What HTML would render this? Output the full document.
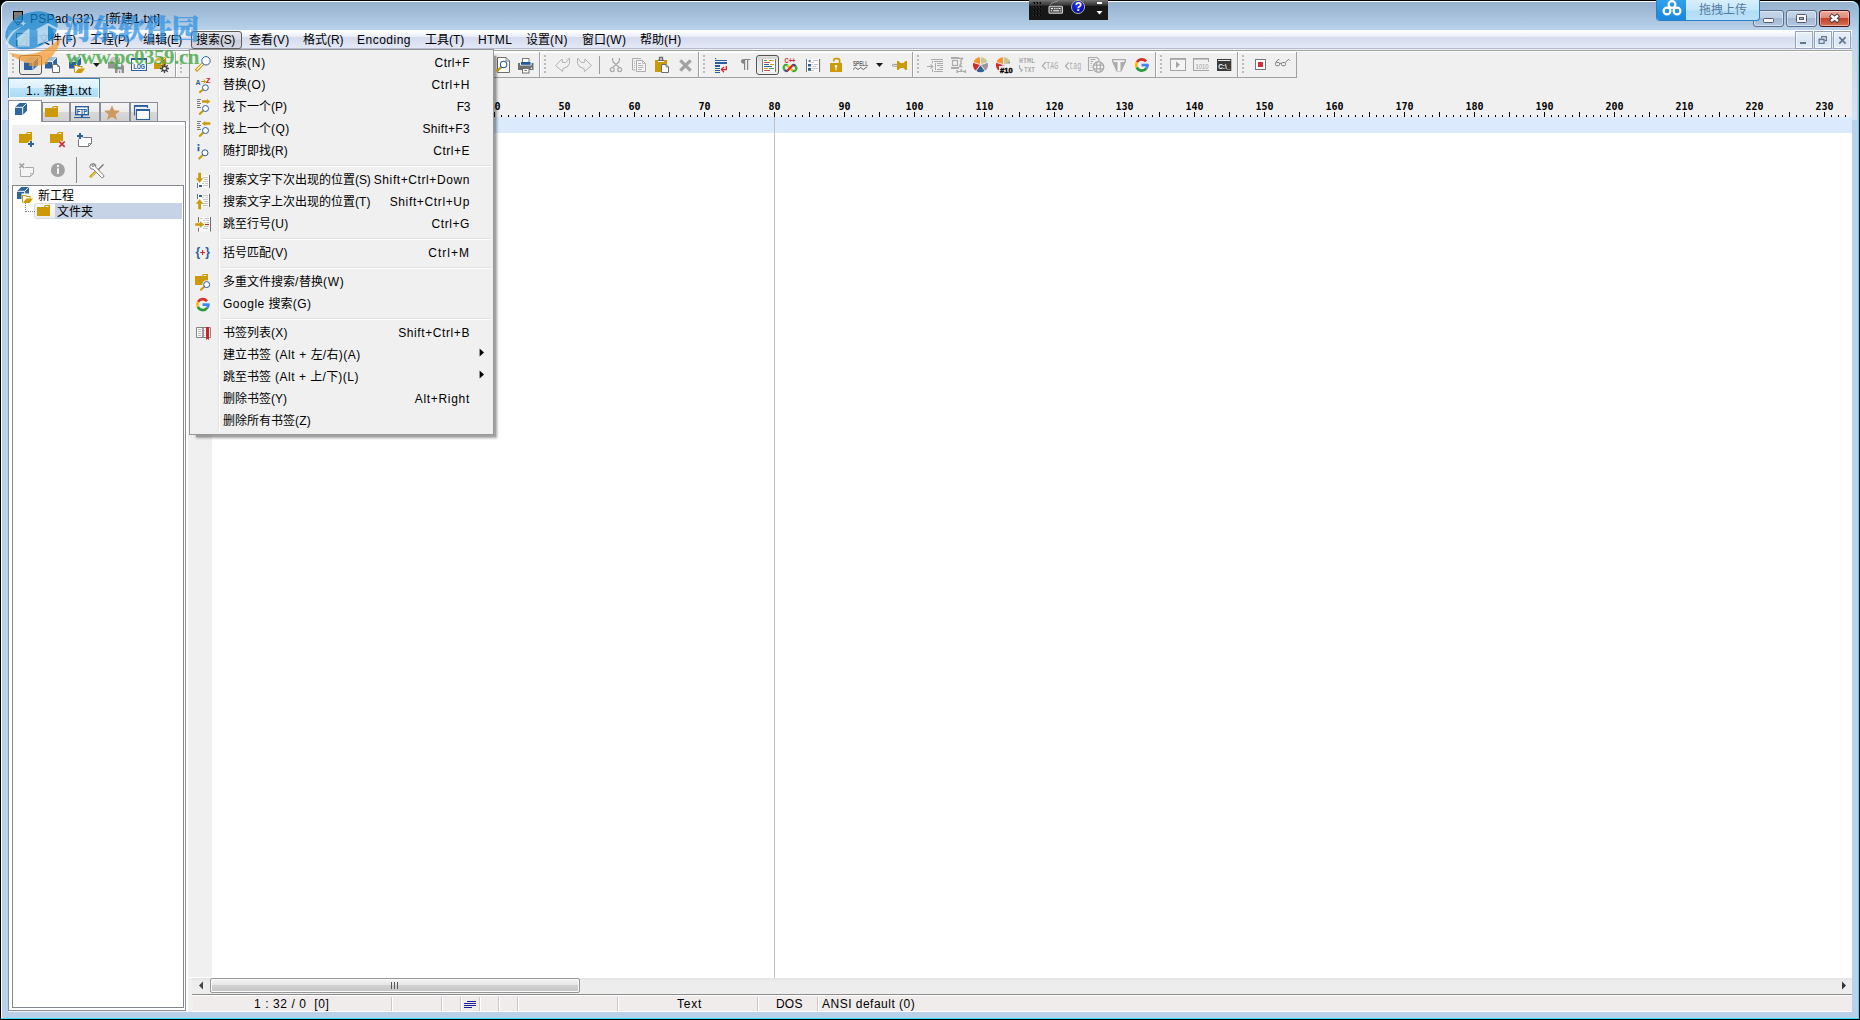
<!DOCTYPE html><html><head><meta charset="utf-8"><title>PSPad</title><style>
*{box-sizing:border-box;margin:0;padding:0}
html,body{width:1860px;height:1020px;overflow:hidden;background:#b9d1ea}
body{position:relative;font-family:"Liberation Sans","Noto Sans CJK SC",sans-serif;font-size:12px;color:#000;line-height:1}
.a{position:absolute}
.t{position:absolute;white-space:nowrap;line-height:16px;height:16px}
.mb{position:absolute;top:32px;white-space:nowrap;line-height:16px;height:16px}
.mi{position:absolute;left:33px;white-space:nowrap;line-height:16px;height:16px}
.sc{position:absolute;right:23px;white-space:nowrap;line-height:16px;height:16px;text-align:right}
.sep{position:absolute;left:31px;right:2px;height:2px;border-top:1px solid #e0e0e0;border-bottom:1px solid #fff}
.grip{position:absolute;top:55px;width:2px;height:18px;background:repeating-linear-gradient(#bcbcbc 0,#bcbcbc 2px,transparent 2px,transparent 4px)}
.tbv{position:absolute;top:52px;width:1px;height:25px;background:#a0a0a0}.tbw{position:absolute;top:51px;width:1px;height:26px;background:#fff}
svg{position:absolute;overflow:visible}
.rn{position:absolute;top:101.4px;width:40px;text-align:center;font-family:"DejaVu Sans Mono","Liberation Mono",monospace;font-weight:bold;font-size:10px;line-height:12px}
.stv{position:absolute;top:997px;width:2px;height:14px;border-left:1px solid #d0c8c8;border-right:1px solid #fff}
.pb{position:absolute;top:55px;width:23px;height:20px;border:1px solid #545454;border-radius:3px;background:linear-gradient(#cfcfcf 0,#e6e6e6 35%,#ececec 100%);box-shadow:inset 0 0 0 1px rgba(255,255,255,0.35)}
.stab{position:absolute;top:102px;height:19px;border:1px solid #8a8e99;border-bottom:none;background:linear-gradient(#f4f4f4 0,#ececec 50%,#d9d9d9 50%,#d0d0d0 100%)}
</style></head><body>
<div class="a" style="left:0;top:0;width:1860px;height:1020px;background:#000"></div>
<div class="a" style="left:1px;top:1px;width:1858px;height:1018px;background:#35dff5;border-radius:7px 7px 0 0"></div>
<div class="a" style="left:1px;top:1px;width:1857px;height:1017px;background:#fff;border-radius:7px 7px 0 0"></div>
<div class="a" style="left:2px;top:2px;width:1856px;height:1016px;background:linear-gradient(#99b4d1 0px,#9ab5d2 4px,#b9d1ea 28px,#b9d1ea 100%);border-radius:6px 6px 0 0"></div>
<div class="a" style="left:2px;top:28px;width:6px;height:92px;background:linear-gradient(rgba(255,255,255,0.05),rgba(255,255,255,0.38))"></div>
<div class="a" style="left:1852px;top:28px;width:5px;height:92px;background:linear-gradient(rgba(255,255,255,0.05),rgba(255,255,255,0.42))"></div>
<div class="a" style="left:8px;top:30px;width:1844px;height:982px;background:#f0f0f0"></div>
<div class="a" style="left:8px;top:30px;width:1844px;height:19px;background:linear-gradient(#ffffff 0,#ffffff 1px,#e8ecf7 7px,#d5daec 7px,#e4e9f8 18px,#b6bbd0 18px,#b6bbd0 19px)"></div>
<div class="a" style="left:8px;top:50px;width:1844px;height:1px;background:#a0a0a0"></div>
<div class="a" style="left:8px;top:51px;width:1844px;height:1px;background:#fff"></div>
<svg style="left:13px;top:11px" width="11" height="16" viewBox="0 0 11 16"><rect x="0.5" y="0.5" width="9" height="8" fill="#7a7a7a" stroke="#000"/><path d="M0.5 8.5 L5 14.3 L9.5 8.5" fill="#e8f0f8" stroke="#0a0a0a"/><path d="M3 10.3 L7 10.3 L5 12.6 Z" fill="#333"/></svg>
<div class="t" style="left:30px;top:11px;font-size:12px"><span id="f0"><span style="letter-spacing:0.21px">PSPad (32) - [</span>新建<span style="letter-spacing:0.21px">1.txt]</span></span></div>
<div class="a" style="left:191px;top:31px;width:51px;height:18px;border:1px solid #5d5d5d;border-radius:3px;background:linear-gradient(#e8e8ee,#d4d6e0 50%,#c9ccd8 50%,#d5d8e4)"></div>
<svg style="left:15px;top:32px" width="16" height="16" viewBox="0 0 16 16"><rect x="1.5" y="1.5" width="10" height="12" fill="#fff" stroke="#555"/><path d="M4 11 L11 3 L13 5 L6 12 L3.5 12.5 Z" fill="#f0c060" stroke="#a07020" stroke-width="0.6"/><path d="M11 3 L12 2 L14 4 L13 5 Z" fill="#e89aa8"/></svg>
<div class="mb" style="left:38px"><span id="f1">文件<span style="letter-spacing:-0.51px">(F)</span></span></div>
<div class="mb" style="left:90px"><span id="f2">工程<span style="letter-spacing:-0.23px">(P)</span></span></div>
<div class="mb" style="left:143px"><span id="f3">编辑<span style="letter-spacing:-0.33px">(E)</span></span></div>
<div class="mb" style="left:196px"><span id="f4">搜索<span style="letter-spacing:-0.33px">(S)</span></span></div>
<div class="mb" style="left:249px"><span id="f5">查看<span style="letter-spacing:0.10px">(V)</span></span></div>
<div class="mb" style="left:303px"><span id="f6">格式<span style="letter-spacing:-0.12px">(R)</span></span></div>
<div class="mb" style="left:357px"><span id="f7"><span style="letter-spacing:0.49px">Encoding</span></span></div>
<div class="mb" style="left:425px"><span id="f8">工具<span style="letter-spacing:-0.08px">(T)</span></span></div>
<div class="mb" style="left:478px"><span id="f9"><span style="letter-spacing:0.41px">HTML</span></span></div>
<div class="mb" style="left:526px"><span id="f10">设置<span style="letter-spacing:0.38px">(N)</span></span></div>
<div class="mb" style="left:582px"><span id="f11">窗口<span style="letter-spacing:0.36px">(W)</span></span></div>
<div class="mb" style="left:640px"><span id="f12">帮助<span style="letter-spacing:0.24px">(H)</span></span></div>
<div class="a" style="left:8px;top:77px;width:1289px;height:1px;background:#a0a0a0"></div>
<div class="a" style="left:8px;top:52px;width:1288px;height:1px;background:#fff"></div>
<div class="tbv" style="left:175px"></div>
<div class="tbv" style="left:539px"></div>
<div class="tbv" style="left:698px"></div>
<div class="tbv" style="left:912px"></div>
<div class="tbv" style="left:1155px"></div>
<div class="tbv" style="left:1237px"></div>
<div class="tbv" style="left:1296px"></div>
<div class="tbw" style="left:8px"></div>
<div class="tbw" style="left:176px"></div>
<div class="tbw" style="left:540px"></div>
<div class="tbw" style="left:699px"></div>
<div class="tbw" style="left:913px"></div>
<div class="tbw" style="left:1156px"></div>
<div class="tbw" style="left:1238px"></div>
<div class="grip" style="left:12px"></div>
<div class="grip" style="left:180px"></div>
<div class="grip" style="left:544px"></div>
<div class="grip" style="left:703px"></div>
<div class="grip" style="left:917px"></div>
<div class="grip" style="left:1160px"></div>
<div class="grip" style="left:1242px"></div>
<div class="pb" style="left:19px"></div>
<div class="pb" style="left:756px"></div>
<svg style="left:8px;top:52px" width="1292" height="26" viewBox="8 52 1292 26"><path d="M24 62.04 h8.96 v7.96 h-8.96 Z" fill="#2c5f9e"/><path d="M24 62.04 l5.04 -5.04 h8.96 l-5.04 5.04 Z" fill="#9fbfe0"/><path d="M32.96 62.04 l5.04 -5.04 v7.96 l-5.04 5.04 Z" fill="#2f64a4"/><path d="M24.3 62.04 h8.66 v7.66 M32.96 62.04 l4.64 -4.64" stroke="#fff" stroke-width="0.9" fill="none"/><path d="M45 61.32 h7.68 v7.18 h-7.68 Z" fill="#2c5f9e"/><path d="M45 61.32 l4.32 -4.32 h7.68 l-4.32 4.32 Z" fill="#9fbfe0"/><path d="M52.68 61.32 l4.32 -4.32 v7.18 l-4.32 4.32 Z" fill="#2f64a4"/><path d="M45.3 61.32 h7.38 v6.88 M52.68 61.32 l3.9200000000000004 -3.9200000000000004" stroke="#fff" stroke-width="0.9" fill="none"/><path d="M52.5 64.5 h5 l2 2 v6 h-7 Z" fill="#fff" stroke="#6a6a6a"/><path d="M57.5 64.5 v2 h2" fill="none" stroke="#6a6a6a" stroke-width="0.8"/><path d="M69 61.32 h7.68 v7.18 h-7.68 Z" fill="#2c5f9e"/><path d="M69 61.32 l4.32 -4.32 h7.68 l-4.32 4.32 Z" fill="#9fbfe0"/><path d="M76.68 61.32 l4.32 -4.32 v7.18 l-4.32 4.32 Z" fill="#2f64a4"/><path d="M69.3 61.32 h7.38 v6.88 M76.68 61.32 l3.9200000000000004 -3.9200000000000004" stroke="#fff" stroke-width="0.9" fill="none"/><path d="M74.5 72.5 v-7 h3 l1 1 h3.5 v2" fill="#fff" stroke="#cc9a06" stroke-width="1.1"/><path d="M75 73 l3.5 -4.5 h6.5 l-3.5 4.5 Z" fill="#cc9a06"/><path d="M93 63 h7 l-3.5 4 Z" fill="#1a1a1a"/><path d="M108 61.32 h7.68 v7.18 h-7.68 Z" fill="#959595"/><path d="M108 61.32 l4.32 -4.32 h7.68 l-4.32 4.32 Z" fill="#c4c4c4"/><path d="M115.68 61.32 l4.32 -4.32 v7.18 l-4.32 4.32 Z" fill="#a8a8a8"/><path d="M108.3 61.32 h7.38 v6.88 M115.68 61.32 l3.9200000000000004 -3.9200000000000004" stroke="#fff" stroke-width="0.9" fill="none"/><path d="M115 64 h7 l2 2 v7 h-9 Z" fill="#909090"/><rect x="117" y="64" width="4" height="2.6" fill="#f0f0f0"/><rect x="117.5" y="69.5" width="4" height="3.5" fill="#f0f0f0"/><rect x="119" y="70.5" width="1.2" height="2.5" fill="#909090"/><rect x="131.5" y="59" width="15" height="11.5" fill="#fff" stroke="#2c5f9e" stroke-width="1"/><rect x="131" y="58" width="16" height="2" fill="#2c5f9e"/><text x="139.2" y="68.6" text-anchor="middle" font-family="Liberation Sans,sans-serif" font-weight="bold" font-size="7.4" fill="#2c5f9e" stroke="#2c5f9e" stroke-width="0.2" textLength="11.4" lengthAdjust="spacingAndGlyphs">LOG</text><path d="M154 61.32 h7.68 v7.68 h-7.68 Z" fill="#cc9a06"/><path d="M154 61.32 l4.32 -4.32 h7.68 l-4.32 4.32 Z" fill="#dcb034"/><path d="M161.68 61.32 l4.32 -4.32 v7.68 l-4.32 4.32 Z" fill="#c08c04"/><path d="M154.3 61.32 h7.38 v7.38 M161.68 61.32 l3.9200000000000004 -3.9200000000000004" stroke="#fff" stroke-width="0.9" fill="none"/><path d="M155 62.4 h5" stroke="#fff" stroke-width="1"/><g stroke="#444" stroke-width="1.3"><path d="M164.5 64 v9 M160 68.5 h9 M161.3 65.3 l6.4 6.4 M167.7 65.3 l-6.4 6.4"/></g><circle cx="164.5" cy="68.5" r="1.5" fill="#f0f0f0"/><circle cx="164.5" cy="68.5" r="2.6" fill="none" stroke="#444" stroke-width="1"/><path d="M497.5 57.5 h8.5 l3.5 3.5 v11.5 h-12 Z" fill="#fff" stroke="#6e6e6e"/><path d="M506 57.5 v3.5 h3.5" fill="none" stroke="#6e6e6e" stroke-width="0.8"/><path d="M496.7 71.5 L501.5 66.7" stroke="#cc9a06" stroke-width="2.3"/><circle cx="503.6" cy="64.4" r="3.2" fill="#fff" stroke="#2c5f9e" stroke-width="1.1"/><rect x="522.5" y="58.5" width="6.5" height="5" fill="#fff" stroke="#7a7a7a"/><rect x="521" y="62" width="9.5" height="2.8" fill="#1f5c99"/><path d="M518 63 h2 v2.5 h11.5 v-2.5 h2 v7 h-15.5 Z" fill="#707070"/><circle cx="531.5" cy="68.3" r="0.8" fill="#fff"/><rect x="522.5" y="68.5" width="6.5" height="4.5" fill="#fff" stroke="#707070"/><path d="M524.5 70.5 h2.5" stroke="#707070"/><path transform="translate(554,57)" d="M1.5 8.5 L8 2 L8.5 5.5 L11.5 5.5 Q14 4 14.5 1.5 L15.5 1.5 L15.5 6.5 Q14 11 9 11.5 L8.5 14.5 Z" fill="none" stroke="#b2b2b2" stroke-width="1"/><path transform="translate(593,57) scale(-1,1)" d="M1.5 8.5 L8 2 L8.5 5.5 L11.5 5.5 Q14 4 14.5 1.5 L15.5 1.5 L15.5 6.5 Q14 11 9 11.5 L8.5 14.5 Z" fill="none" stroke="#b2b2b2" stroke-width="1"/><rect x="599" y="56" width="1" height="18" fill="#9a9a9a"/><g fill="none" stroke="#a9a9a9" stroke-width="1.2"><path d="M612.6 58 v2 Q612.6 62 616 64.5 L619.3 67.5 M619.4 58 v2 Q619.4 62 616 64.5 L612.7 67.5"/><circle cx="612.3" cy="69.6" r="2"/><circle cx="619.7" cy="69.6" r="2"/></g><g fill="none" stroke="#adadad" stroke-width="1"><path d="M641 58.5 h-8.5 v11.5 h3"/><path d="M636.5 60.5 h6 l3 3 v8 h-9 Z" fill="#f6f6f6"/><path d="M642.5 60.5 v3 h3" stroke-width="0.8"/></g><path d="M634 61.5 h1 M634 63.5 h1 M634 65.5 h1 M634 67.5 h1 M638 63.5 h3 M638 65.5 h5.5 M638 67.5 h5.5 M638 69.5 h4" stroke="#b4b4b4"/><path d="M655 60 h3 v2 h6 v-2 h3 v12 h-12 Z" fill="#cc9a06"/><path d="M659.5 59.8 v-2.3 h3 v2.3 M658 60.3 h6" fill="none" stroke="#6a6a6a" stroke-width="1.3"/><path d="M661.5 64.5 h4.5 l2.5 2.5 v5.5 h-7 Z" fill="#fff" stroke="#6e6e6e"/><path d="M666 64.5 v2.5 h2.5" fill="none" stroke="#6e6e6e" stroke-width="0.8"/><path d="M680.3 60.3 L690.7 70.7 M690.7 60.3 L680.3 70.7" stroke="#a2a2a2" stroke-width="3.2"/><g fill="#2c5f9e"><rect x="715" y="58" width="1.2" height="1.2"/><rect x="715" y="60" width="12" height="1"/><rect x="715" y="62" width="12" height="2"/><rect x="715" y="65" width="5" height="2"/><rect x="715" y="68" width="5" height="1"/><rect x="715" y="70" width="5" height="1"/><rect x="715" y="72" width="5" height="1"/></g><path d="M726.3 66 v3.6 h-4.5 M724 67 l-2.6 2.6 l2.6 2.6" fill="none" stroke="#d0282e" stroke-width="1.3"/><path d="M744 59 h6.5 v1 h-2.3 v10 h-1.2 v-10 h-1.8 v10 h-1.2 v-6.3 Q741 63.6 741 61.3 Q741 59 744 59 Z" fill="#858585"/><rect x="762" y="59" width="1" height="13" fill="#7a7a7a"/><rect x="775" y="59" width="1" height="13" fill="#7a7a7a"/><rect x="763" y="59" width="12" height="13" fill="#fff"/><g stroke-width="1.1" stroke-linecap="round"><path d="M764.5 60.5 h2" stroke="#4a9a4a"/><path d="M769.5 60.5 h4" stroke="#cc9a06"/><path d="M764.5 62.5 h5" stroke="#d04a50"/><path d="M764.5 64.5 h4" stroke="#2c5f9e"/><path d="M770.5 64.5 h3" stroke="#cc9a06"/><path d="M764.5 66.5 h7" stroke="#2c5f9e"/><path d="M764.5 68.5 h3" stroke="#cc9a06"/><path d="M769.5 68.5 h4" stroke="#4a9a4a"/><path d="M764.5 70.5 h5" stroke="#d04a50"/></g><text x="790" y="62.8" text-anchor="middle" font-family="Liberation Sans,sans-serif" font-weight="bold" font-size="6.6" fill="#d0282e" textLength="11" lengthAdjust="spacingAndGlyphs">C++</text><g fill="none" stroke-width="2.3"><path d="M790 68 L787.5 65.5" stroke="#f6c000"/><path d="M787.5 65.3 Q785.5 64.3 784 66" stroke="#3cb030"/><path d="M784 66 Q783 68 784.5 70" stroke="#3cb030"/><path d="M784.5 70 Q786 71.5 787.5 70.8" stroke="#2458a0"/><path d="M790 68 L792.5 70.7" stroke="#f6c000"/><path d="M792.5 70.7 Q794.5 71.7 796 70" stroke="#3cb030"/><path d="M796 70 Q797 68 795.5 66" stroke="#3cb030"/><path d="M795.5 66 Q794 64.5 792.5 65.2" stroke="#2458a0"/><path d="M786.8 71.3 L793.2 64.7" stroke="#d02830"/></g><rect x="806" y="59" width="1.1" height="13" fill="#747474"/><rect x="819" y="59" width="1.1" height="13" fill="#747474"/><rect x="807.1" y="59" width="11.9" height="13" fill="#fcfcfc"/><g fill="#2c5f9e"><path d="M808 61 l2.5 -1.5 v3 Z"/><rect x="808" y="64" width="3" height="2.5"/><rect x="808" y="68" width="3" height="2.8"/></g><path d="M813 60.5 h5 M811.5 62.5 h2.3 M811.5 64.5 h1.3 M814 64.5 h4 M812.5 66.5 h4 M812 68.5 h6 M811.5 70.5 h2.5" stroke="#c2c2c2"/><path d="M833.8 61.5 v-1.2 q0 -1.6 1.6 -1.6 h2.4 q1.8 0 1.8 1.8 v3" fill="none" stroke="#cc9a06" stroke-width="1.7"/><rect x="830" y="63" width="12" height="9" fill="#cc9a06"/><circle cx="836" cy="66.3" r="1.3" fill="#fff"/><rect x="835.5" y="66.3" width="1" height="4" fill="#fff"/><text x="860.5" y="66" text-anchor="middle" font-family="Liberation Sans,sans-serif" font-weight="bold" font-size="7.2" fill="#5e5e5e" textLength="15" lengthAdjust="spacingAndGlyphs">SPELL</text><path d="M853 69.5 l2.3 -2 l2.7 2 l2.7 -2 l2.7 2 l2.8 -2.2 l1 0" fill="none" stroke="#555" stroke-width="0.9"/><path d="M876 63 h7 l-3.5 4 Z" fill="#1a1a1a"/><path d="M897.5 64.4 h-4 l-1.5 0.9 l1.5 0.9 h4" fill="#fff" stroke="#8a8a8a" stroke-width="0.9"/><path d="M897 61 h1.5 l2 2 h3 l2 -2 h1.5 v9 h-1.5 l-2 -2 h-3 l-2 2 h-1.5 Z" fill="#cc9a06"/><g stroke="#ababab" fill="none" stroke-width="1"><path d="M931 59.5 h12 M934 61.5 h9 M937 63.5 h6 M937 65.5 h6 M940 67.5 h3 M937 69.5 h6 M934 71.5 h9 M932.5 61 v2.3 M932.5 69 v3 M935.5 63 v7"/><path d="M927 66.5 h5.5 M930.5 64.3 l2.3 2.2 l-2.3 2.2" stroke-width="1.1"/></g><g stroke="#ababab" fill="none"><path d="M951 58 h8 M951 68 h8" stroke-width="2"/><rect x="952.5" y="60.5" width="5" height="5" stroke-width="1.2"/><path d="M959 58.5 h3.5 l-2 3 l1 1.5 l-1.5 2 l1.5 1.5 h-2.5" stroke-width="1.3"/><path d="M958 71.5 h7" stroke-width="1"/><rect x="956.5" y="70" width="1.6" height="3" fill="#ababab" stroke="none"/><rect x="964.5" y="70" width="1.6" height="3" fill="#ababab" stroke="none"/><rect x="960.5" y="69" width="1.6" height="2.5" fill="#ababab" stroke="none"/></g><path d="M980.5 64.7 L980.50 57.20 A7.5 7.5 0 0 1 987.63 62.38 Z" fill="#c9c997"/><path d="M980.5 64.7 L987.63 62.38 A7.5 7.5 0 0 1 984.91 70.77 Z" fill="#999999"/><path d="M980.5 64.7 L984.91 70.77 A7.5 7.5 0 0 1 976.09 70.77 Z" fill="#2c6098"/><path d="M980.5 64.7 L976.09 70.77 A7.5 7.5 0 0 1 973.37 62.38 Z" fill="#cc2d2d"/><path d="M980.5 64.7 L973.37 62.38 A7.5 7.5 0 0 1 980.50 57.20 Z" fill="#f9922e"/><path d="M980.5 64.7 L980.50 56.83" stroke="#f0f0f0" stroke-width="0.9"/><path d="M980.5 64.7 L987.99 62.27" stroke="#f0f0f0" stroke-width="0.9"/><path d="M980.5 64.7 L985.13 71.07" stroke="#f0f0f0" stroke-width="0.9"/><path d="M980.5 64.7 L975.87 71.07" stroke="#f0f0f0" stroke-width="0.9"/><path d="M980.5 64.7 L973.01 62.27" stroke="#f0f0f0" stroke-width="0.9"/><path d="M1003.5 64.7 L1003.50 57.20 A7.5 7.5 0 0 1 1010.63 62.38 Z" fill="#c9c997"/><path d="M1003.5 64.7 L1010.63 62.38 A7.5 7.5 0 0 1 1007.91 70.77 Z" fill="#999999"/><path d="M1003.5 64.7 L1007.91 70.77 A7.5 7.5 0 0 1 999.09 70.77 Z" fill="#2c6098"/><path d="M1003.5 64.7 L999.09 70.77 A7.5 7.5 0 0 1 996.37 62.38 Z" fill="#cc2d2d"/><path d="M1003.5 64.7 L996.37 62.38 A7.5 7.5 0 0 1 1003.50 57.20 Z" fill="#f9922e"/><path d="M1003.5 64.7 L1003.50 56.83" stroke="#f0f0f0" stroke-width="0.9"/><path d="M1003.5 64.7 L1010.99 62.27" stroke="#f0f0f0" stroke-width="0.9"/><path d="M1003.5 64.7 L1008.13 71.07" stroke="#f0f0f0" stroke-width="0.9"/><path d="M1003.5 64.7 L998.87 71.07" stroke="#f0f0f0" stroke-width="0.9"/><path d="M1003.5 64.7 L996.01 62.27" stroke="#f0f0f0" stroke-width="0.9"/><path d="M999 66 h14 v8 h-14 Z M1005 63 h9 v4 h-9Z" fill="#f0f0f0"/><path d="M1004.5 63.5 l5.5 -1.8 v1.8 Z" fill="#999"/><text x="1006.3" y="72.6" text-anchor="middle" font-family="Liberation Sans,sans-serif" font-weight="bold" font-size="7.6" fill="#000" stroke="#000" stroke-width="0.35" textLength="12.5" lengthAdjust="spacingAndGlyphs">#10</text><text x="1027" y="62.7" text-anchor="middle" font-family="Liberation Mono,monospace" font-weight="bold" font-size="6.4" fill="#ababab" textLength="16" lengthAdjust="spacingAndGlyphs">HTML</text><text x="1029.5" y="72" text-anchor="middle" font-family="Liberation Mono,monospace" font-weight="bold" font-size="6.4" fill="#ababab" textLength="11" lengthAdjust="spacingAndGlyphs">TXT</text><path d="M1019.5 65 v3 l2 2 M1020.5 72 l2 -2.2 l-2.8 -0.5" fill="none" stroke="#ababab" stroke-width="1.1"/><path d="M1045.8 62 l-3.3 3.7 l3.3 3.7" fill="none" stroke="#ababab" stroke-width="1.2"/><text x="1052.3" y="69.2" text-anchor="middle" font-family="Liberation Mono,monospace" font-size="10.5" fill="#ababab" textLength="12" lengthAdjust="spacingAndGlyphs">TAG</text><path d="M1068.8 62.3 l-3.3 3.7 l3.3 3.7" fill="none" stroke="#ababab" stroke-width="1.2"/><text x="1075.3" y="69" text-anchor="middle" font-family="Liberation Mono,monospace" font-size="10.5" fill="#ababab" textLength="12" lengthAdjust="spacingAndGlyphs">tag</text><g fill="none" stroke="#ababab" stroke-width="1.1"><path d="M1093 70.5 h-4.5 v-13 h8.5 l2 2 v1.5"/><path d="M1090.5 59.5 h5 M1090.5 61.5 h2.5 M1090.5 63.5 h1.5 M1090.5 65.5 h1 M1090.5 67.5 h1"/></g><circle cx="1098.5" cy="67" r="5.2" fill="#f6f6f6" stroke="#ababab" stroke-width="1.5"/><path d="M1096.7 62 v10 M1100.3 62 v10 M1093.5 65.2 h10 M1093.5 68.8 h10" stroke="#ababab" stroke-width="1.2"/><path d="M1112 59 h14 v2.5 l-4.5 10 h-5 l-4.5 -10 Z" fill="#ababab"/><path d="M1113.5 60.3 h11 v1.6 h-4 v9 h-3 v-9 h-4 Z" fill="#f4f4f4"/><g fill="none" stroke-width="2.7"><path d="M1146.09 61.40 A5.6 5.6 0 0 0 1136.95 62.20" stroke="#db3028"/><path d="M1136.95 62.20 A5.6 5.6 0 0 0 1136.72 67.37" stroke="#fbbc05"/><path d="M1136.72 67.37 A5.6 5.6 0 0 0 1146.39 68.21" stroke="#2a9a3c"/><path d="M1146.39 68.21 A5.6 5.6 0 0 0 1147.40 65.00" stroke="#4285f4"/></g><rect x="1141.5" y="63.7" width="7.199999999999999" height="2.7" fill="#4285f4"/><rect x="1170.5" y="59" width="15" height="11.5" fill="#f4f4f4" stroke="#a4a4a4"/><rect x="1170" y="58" width="16" height="1.6" fill="#a4a4a4"/><path d="M1176 61.3 l4 3.5 l-4 3.5 Z" fill="#a6a6a6"/><path d="M1193.5 70.5 v-11.5 M1208.5 59 v3 M1193 70.5 h16" fill="none" stroke="#a4a4a4"/><rect x="1193" y="58" width="16" height="1.6" fill="#a4a4a4"/><text x="1202" y="69.3" text-anchor="middle" font-family="Liberation Sans,sans-serif" font-size="6.8" fill="#a0a0a0" textLength="13" lengthAdjust="spacingAndGlyphs">1010</text><rect x="1217" y="59" width="14.3" height="12" fill="#3a3a3a"/><path d="M1218 60.5 h12.3" stroke="#fff" stroke-width="0.9"/><text x="1224.2" y="68.8" text-anchor="middle" font-family="Liberation Sans,sans-serif" font-weight="bold" font-size="6.4" fill="#fff" textLength="12" lengthAdjust="spacingAndGlyphs">C:\_</text><rect x="1255.5" y="59.5" width="10" height="10" fill="#fff" stroke="#767676"/><rect x="1258" y="62" width="5" height="5" fill="#d03030"/><g fill="none" stroke="#777" stroke-width="0.95"><rect x="1275.5" y="62.5" width="4" height="3.2" rx="1.2"/><rect x="1281.5" y="62.5" width="4" height="3.2" rx="1.2"/><path d="M1279.5 63.3 h2 M1275.7 62.5 l2.8 -3.3 l1 1 M1285.3 62.5 l3.2 -3.3 l1.2 1.5"/></g></svg>
<div class="a" style="left:8px;top:78px;width:92px;height:20px;border:1px solid #3c7fb1;border-bottom:none;background:linear-gradient(#eaf6fd 0,#dcf1fc 45%,#bce4f9 48%,#a9d9f5 100%);box-shadow:inset 0 0 0 1px #f4fbfe"></div>
<div class="t" style="left:26px;top:82.5px"><span id="f13"><span style="letter-spacing:0.25px">1.. </span>新建<span style="letter-spacing:0.25px">1.txt</span></span></div>
<div class="a" style="left:8px;top:121px;width:178px;height:890px;border:1px solid #8a8e99;background:#fff"></div>
<div class="a" style="left:12px;top:125px;width:172px;height:60px;background:#f0f0f0"></div>
<div class="a" style="left:12px;top:185px;width:172px;height:823px;border:1px solid #828790;background:#fff"></div>
<div class="stab" style="left:42px;width:28px"></div>
<div class="stab" style="left:70px;width:30px"></div>
<div class="stab" style="left:100px;width:30px"></div>
<div class="stab" style="left:130px;width:28px"></div>
<div class="a" style="left:8px;top:100px;width:34px;height:22px;border:1px solid #8a8e99;border-bottom:none;background:#fff"></div>
<div class="t" style="left:38px;top:188px">新工程</div>
<div class="a" style="left:55px;top:203px;width:127px;height:16px;background:#c6d3e6"></div>
<div class="a" style="left:34px;top:203px;width:21px;height:16px;background:linear-gradient(#fafafa,#ececec);border-radius:3px 0 0 3px;border:1px solid #dcdcdc;border-right:none"></div>
<div class="a" style="left:25px;top:203px;width:10px;height:9px;border-left:1px dotted #808080;border-bottom:1px dotted #808080"></div>
<div class="t" style="left:57px;top:204px">文件夹</div>
<svg style="left:8px;top:100px" width="180" height="125" viewBox="8 100 180 125"><path d="M15 107.32 h7.68 v7.68 h-7.68 Z" fill="#31669c"/><path d="M15 107.32 l4.32 -4.32 h7.68 l-4.32 4.32 Z" fill="#31669c"/><path d="M22.68 107.32 l4.32 -4.32 v7.68 l-4.32 4.32 Z" fill="#31669c"/><path d="M15.3 107.32 h7.38 v7.38 M22.68 107.32 l3.9200000000000004 -3.9200000000000004" stroke="#fff" stroke-width="0.9" fill="none"/><path d="M45 108 h6.8 l1.2 -2 h5.0 v11 h-13 Z" fill="#cc9a06"/><path d="M53.4 107.5 h3.0" stroke="#fdf6e0" stroke-width="1"/><rect x="75.7" y="106.7" width="12.6" height="8" fill="#fff" stroke="#2c5f9e" stroke-width="1.4"/><text x="82" y="113.6" text-anchor="middle" font-family="Liberation Sans,sans-serif" font-weight="bold" font-size="7" fill="#2c5f9e" stroke="#2c5f9e" stroke-width="0.25" textLength="10.4" lengthAdjust="spacingAndGlyphs">FTP</text><rect x="81" y="115" width="2" height="2.3" fill="#2c5f9e"/><rect x="74" y="117" width="16" height="1.1" fill="#2c5f9e"/><path d="M112 105 L114.1 110.3 L120 110.7 L115.5 114.4 L117 120 L112 116.9 L107 120 L108.5 114.4 L104 110.7 L109.9 110.3 Z" fill="#cf9a62"/><path d="M134.5 115.5 v-9.5 h13 v2" fill="none" stroke="#2c5f9e" stroke-width="1.1"/><rect x="134" y="105" width="14" height="1.8" fill="#2c5f9e"/><rect x="136.5" y="110" width="13" height="9.5" fill="#fff" stroke="#2c5f9e" stroke-width="1.1"/><rect x="136" y="109" width="14" height="2" fill="#2c5f9e"/><path d="M19 134 h6.8 l1.2 -2 h5.0 v11 h-13 Z" fill="#cc9a06"/><path d="M27.4 133.5 h3.0" stroke="#fdf6e0" stroke-width="1"/><path d="M31 140.5 v7 M27.5 144 h7" stroke="#f0f0f0" stroke-width="3.6"/><path d="M31 141 v6 M28 144 h6" stroke="#2c5f9e" stroke-width="1.9"/><path d="M50 134 h6.8 l1.2 -2 h5.0 v11 h-13 Z" fill="#cc9a06"/><path d="M58.4 133.5 h3.0" stroke="#fdf6e0" stroke-width="1"/><path d="M59.3 141.5 l5.4 5.4 M64.7 141.5 l-5.4 5.4" stroke="#f0f0f0" stroke-width="3.4"/><path d="M59.3 141.5 l5.4 5.4 M64.7 141.5 l-5.4 5.4" stroke="#d0282e" stroke-width="1.7"/><path d="M78.5 137.5 h13 v6 l-3 3 h-10 Z" fill="#fff" stroke="#777"/><path d="M88.5 146.5 v-3 h3" fill="none" stroke="#777" stroke-width="0.8"/><path d="M80 132.6 v7 M76.5 136 h7" stroke="#f0f0f0" stroke-width="3.4"/><path d="M80 133 v6 M77 136 h6" stroke="#2c5f9e" stroke-width="1.9"/><path d="M20.5 167.5 h13 v6 l-3 3 h-10 Z" fill="#f4f4f4" stroke="#a8a8a8"/><path d="M30.5 176.5 v-3 h3" fill="none" stroke="#a8a8a8" stroke-width="0.8"/><path d="M19.3 163.3 l5 5 M24.3 163.3 l-5 5" stroke="#f0f0f0" stroke-width="3"/><path d="M19.5 163.5 l4.6 4.6 M24.1 163.5 l-4.6 4.6" stroke="#9a9a9a" stroke-width="1.4"/><circle cx="57.9" cy="170" r="7" fill="#a2a2a2"/><rect x="57" y="168.3" width="2" height="5.7" fill="#f4f4f4"/><circle cx="58" cy="166" r="1.2" fill="#f4f4f4"/><rect x="76" y="157" width="1" height="26" fill="#8a8a8a"/><path d="M90 177.3 L95.5 171.8" stroke="#cc9a06" stroke-width="2.6"/><path d="M90.3 177.5 L95.6 172.2" stroke="#fdf3d0" stroke-width="0.7"/><path d="M103.5 164.3 L97.5 170.5" stroke="#666" stroke-width="1.2"/><path d="M93.8 163.6 Q89.8 163.3 89.7 166.8 Q90.2 169.6 93.3 169.2 L101.3 177.3 Q102.8 178.3 103.7 177 Q104.3 175.8 103.2 174.8 L95.6 167 Q96.3 164.8 94.6 163.8 L94.2 166 L92.5 166.5 L91.8 165.2 Z" fill="#fff" stroke="#6a6a6a" stroke-width="0.9"/><path d="M17 191.32 h7.68 v7.68 h-7.68 Z" fill="#31669c"/><path d="M17 191.32 l4.32 -4.32 h7.68 l-4.32 4.32 Z" fill="#31669c"/><path d="M24.68 191.32 l4.32 -4.32 v7.68 l-4.32 4.32 Z" fill="#31669c"/><path d="M17.3 191.32 h7.38 v7.38 M24.68 191.32 l3.9200000000000004 -3.9200000000000004" stroke="#fff" stroke-width="0.9" fill="none"/><rect x="21.5" y="193.5" width="9" height="8" fill="#fff"/><path d="M22.5 202.5 v-7 h3.2 l1 1 h3.3 v2" fill="#fff" stroke="#cc9a06" stroke-width="1.1"/><path d="M23 203 l3.3 -4.6 h6.7 l-3.3 4.6 Z" fill="#cc9a06"/><path d="M37 207 h6.8 l1.2 -2 h5.0 v11 h-13 Z" fill="#cc9a06"/><path d="M45.4 206.5 h3.0" stroke="#fdf6e0" stroke-width="1"/></svg>
<div class="a" style="left:190px;top:79px;width:1662px;height:38px;background:#f0f0f0"></div>
<svg style="left:211px;top:100px" width="1641" height="17" viewBox="0 0 1641 17"><defs><pattern id="tk" x="3" y="0" width="35" height="17" patternUnits="userSpaceOnUse"><rect x="0" y="12" width="1" height="5" fill="#000"/><rect x="7" y="15" width="1" height="2" fill="#000"/><rect x="14" y="15" width="1" height="2" fill="#000"/><rect x="21" y="15" width="1" height="2" fill="#000"/><rect x="28" y="15" width="1" height="2" fill="#000"/></pattern></defs><rect x="283" y="0" width="1357" height="17" fill="url(#tk)"/></svg>
<div class="rn" style="left:474.5px">40</div>
<div class="rn" style="left:544.5px">50</div>
<div class="rn" style="left:614.5px">60</div>
<div class="rn" style="left:684.5px">70</div>
<div class="rn" style="left:754.5px">80</div>
<div class="rn" style="left:824.5px">90</div>
<div class="rn" style="left:894.5px">100</div>
<div class="rn" style="left:964.5px">110</div>
<div class="rn" style="left:1034.5px">120</div>
<div class="rn" style="left:1104.5px">130</div>
<div class="rn" style="left:1174.5px">140</div>
<div class="rn" style="left:1244.5px">150</div>
<div class="rn" style="left:1314.5px">160</div>
<div class="rn" style="left:1384.5px">170</div>
<div class="rn" style="left:1454.5px">180</div>
<div class="rn" style="left:1524.5px">190</div>
<div class="rn" style="left:1594.5px">200</div>
<div class="rn" style="left:1664.5px">210</div>
<div class="rn" style="left:1734.5px">220</div>
<div class="rn" style="left:1804.5px">230</div>
<div class="a" style="left:188px;top:117px;width:1664px;height:861px;background:#fff"></div>
<div class="a" style="left:212px;top:117px;width:1640px;height:16px;background:#dbeafd"></div>
<div class="a" style="left:188px;top:117px;width:24px;height:860px;background:#f0f0f0"></div>
<div class="a" style="left:186px;top:121px;width:2px;height:891px;background:#fff"></div>
<div class="a" style="left:186px;top:978px;width:6px;height:34px;background:#f0f0f0"></div><div class="a" style="left:186px;top:978px;width:2px;height:34px;background:#fff"></div>
<div class="a" style="left:774px;top:117px;width:1px;height:861px;background:#c0c0c0"></div>
<div class="a" style="left:192px;top:978px;width:1660px;height:16px;background:linear-gradient(#e3e3e3 0,#ececec 3px,#eeeeee 100%)"></div>
<div class="a" style="left:210px;top:978px;width:370px;height:15px;border:1px solid #979797;border-radius:2px;background:linear-gradient(#f4f4f4 0,#e6e6e6 45%,#d2d2d2 50%,#c4c4c4 100%);box-shadow:inset 0 0 0 1px #fafafa"></div>
<svg style="left:198px;top:981px" width="6" height="9" viewBox="0 0 6 9"><path d="M5 0.5 L1 4.5 L5 8.5 Z" fill="#444"/></svg>
<svg style="left:1841px;top:981px" width="6" height="9" viewBox="0 0 6 9"><path d="M1 0.5 L5 4.5 L1 8.5 Z" fill="#333"/></svg>
<div class="a" style="left:391px;top:982px;width:7px;height:7px;background:repeating-linear-gradient(90deg,#555 0,#555 1px,transparent 1px,transparent 3px)"></div>
<div class="a" style="left:192px;top:994px;width:1660px;height:1px;background:#8c8c8c"></div>
<div class="a" style="left:192px;top:995px;width:1660px;height:1px;background:#fff"></div>
<div class="a" style="left:193px;top:996px;width:1659px;height:15px;background:#f0eceb"></div>
<div class="a" style="left:192px;top:1011px;width:1660px;height:1px;background:#fff"></div>
<div class="stv" style="left:391px"></div>
<div class="stv" style="left:441px"></div>
<div class="stv" style="left:460px"></div>
<div class="stv" style="left:479px"></div>
<div class="stv" style="left:498px"></div>
<div class="stv" style="left:517px"></div>
<div class="stv" style="left:617px"></div>
<div class="stv" style="left:757px"></div>
<div class="stv" style="left:817px"></div>
<div class="t" style="left:254px;top:996px"><span id="f14"><span style="letter-spacing:0.58px">1 : 32 / 0&nbsp; [0]</span></span></div>
<div class="t" style="left:677px;top:996px"><span id="f15"><span style="letter-spacing:0.75px">Text</span></span></div>
<div class="t" style="left:776px;top:996px"><span id="f16"><span style="letter-spacing:0.20px">DOS</span></span></div>
<div class="t" style="left:822px;top:996px"><span id="f17"><span style="letter-spacing:0.49px">ANSI default (0)</span></span></div>
<svg style="left:464px;top:1000px" width="12" height="10" viewBox="0 0 12 10"><path d="M3 1.5 L12 1.5 M0 3.5 L12 3.5 M0 5.5 L12 5.5 M0 7.5 L8 7.5" stroke="#1a1a9a" stroke-width="1"/></svg>
<div class="a" style="left:196px;top:56px;width:300px;height:381px;background:rgba(0,0,0,0.36);box-shadow:0 0 2.5px 0.5px rgba(0,0,0,0.36)"></div>
<div class="a" style="left:189px;top:49px;width:305px;height:386px;background:#f0f0f0;border:1px solid #979797"><div class="a" style="left:28px;top:2px;width:2px;height:380px;border-left:1px solid #e2e3e3;border-right:1px solid #fff"></div>
<div class="mi" style="top:5.0px"><span id="f18">搜索<span style="letter-spacing:0.74px">(N)</span></span></div>
<div class="sc" style="top:5.0px"><span id="f19"><span style="letter-spacing:0.40px">Ctrl+F</span></span></div>
<div class="mi" style="top:27.0px"><span id="f20">替换<span style="letter-spacing:0.52px">(O)</span></span></div>
<div class="sc" style="top:27.0px"><span id="f21"><span style="letter-spacing:0.69px">Ctrl+H</span></span></div>
<div class="mi" style="top:49.0px"><span id="f22">找下一个<span style="letter-spacing:-0.07px">(P)</span></span></div>
<div class="sc" style="top:49.0px"><span id="f23"><span style="letter-spacing:-0.41px">F3</span></span></div>
<div class="mi" style="top:71.0px"><span id="f24">找上一个<span style="letter-spacing:0.42px">(Q)</span></span></div>
<div class="sc" style="top:71.0px"><span id="f25"><span style="letter-spacing:0.31px">Shift+F3</span></span></div>
<div class="mi" style="top:93.0px"><span id="f26">随打即找<span style="letter-spacing:0.01px">(R)</span></span></div>
<div class="sc" style="top:93.0px"><span id="f27"><span style="letter-spacing:0.50px">Ctrl+E</span></span></div>
<div class="mi" style="top:122.0px"><span id="f28">搜索文字下次出现的位置<span style="letter-spacing:-0.13px">(S)</span></span></div>
<div class="sc" style="top:122.0px"><span id="f29"><span style="letter-spacing:0.59px">Shift+Ctrl+Down</span></span></div>
<div class="mi" style="top:144.0px"><span id="f30">搜索文字上次出现的位置<span style="letter-spacing:0.09px">(T)</span></span></div>
<div class="sc" style="top:144.0px"><span id="f31"><span style="letter-spacing:0.64px">Shift+Ctrl+Up</span></span></div>
<div class="mi" style="top:166.0px"><span id="f32">跳至行号<span style="letter-spacing:0.31px">(U)</span></span></div>
<div class="sc" style="top:166.0px"><span id="f33"><span style="letter-spacing:0.58px">Ctrl+G</span></span></div>
<div class="mi" style="top:195.0px"><span id="f34">括号匹配<span style="letter-spacing:0.23px">(V)</span></span></div>
<div class="sc" style="top:195.0px"><span id="f35"><span style="letter-spacing:1.02px">Ctrl+M</span></span></div>
<div class="mi" style="top:224.0px"><span id="f36">多重文件搜索<span style="letter-spacing:0.71px">/</span>替换<span style="letter-spacing:0.71px">(W)</span></span></div>
<div class="mi" style="top:246.0px"><span id="f37"><span style="letter-spacing:0.51px">Google </span>搜索<span style="letter-spacing:0.51px">(G)</span></span></div>
<div class="mi" style="top:275.0px"><span id="f38">书签列表<span style="letter-spacing:0.23px">(X)</span></span></div>
<div class="sc" style="top:275.0px"><span id="f39"><span style="letter-spacing:0.59px">Shift+Ctrl+B</span></span></div>
<div class="mi" style="top:297.0px"><span id="f40">建立书签<span style="letter-spacing:0.58px"> (Alt + </span>左<span style="letter-spacing:0.58px">/</span>右<span style="letter-spacing:0.58px">)(A)</span></span></div>
<svg style="left:289px;top:298px" width="6" height="10" viewBox="0 0 6 10"><path d="M0.6 0.6 L5 4.6 L0.6 8.6 Z" fill="#000"/></svg>
<div class="mi" style="top:319.0px"><span id="f41">跳至书签<span style="letter-spacing:0.54px"> (Alt + </span>上<span style="letter-spacing:0.54px">/</span>下<span style="letter-spacing:0.54px">)(L)</span></span></div>
<svg style="left:289px;top:320px" width="6" height="10" viewBox="0 0 6 10"><path d="M0.6 0.6 L5 4.6 L0.6 8.6 Z" fill="#000"/></svg>
<div class="mi" style="top:341.0px"><span id="f42">删除书签<span style="letter-spacing:-0.07px">(Y)</span></span></div>
<div class="sc" style="top:341.0px"><span id="f43"><span style="letter-spacing:0.70px">Alt+Right</span></span></div>
<div class="mi" style="top:363.0px"><span id="f44">删除所有书签<span style="letter-spacing:0.22px">(Z)</span></span></div>
<div class="sep" style="top:115px"></div>
<div class="sep" style="top:188px"></div>
<div class="sep" style="top:217px"></div>
<div class="sep" style="top:268px"></div>
</div>
<svg style="left:190px;top:52px" width="28" height="300" viewBox="190 52 28 300"><path d="M197 69.7 L203.2 63.6" stroke="#cc9a06" stroke-width="3.2" stroke-linecap="square"/><path d="M197.2 69.5 L203.2 63.6" stroke="#fff" stroke-width="1.2" stroke-linecap="square"/><circle cx="206" cy="60.8" r="4.2" fill="#fff" stroke="#2c5f9e" stroke-width="1"/><text x="195.8" y="84.6" font-family="Liberation Mono,monospace" font-weight="bold" font-size="7.6" fill="#2c5f9e">A</text><path d="M201 81.5 h4.2 M203.6 79.6 l1.9 1.9 l-1.9 1.9" stroke="#cc9a06" stroke-width="1" fill="none"/><text x="205.8" y="83" font-family="Liberation Mono,monospace" font-weight="bold" font-size="8" fill="#d0282e">Z</text><path d="M199.3 92.6 L203.14 89.52" stroke="#cc9a06" stroke-width="2.1"/><circle cx="205.4" cy="87.7" r="2.9" fill="#fff" stroke="#2c5f9e" stroke-width="1"/><rect x="197" y="99" width="4" height="1" fill="#7a7a7a"/><rect x="197" y="101" width="3" height="1" fill="#7a7a7a"/><rect x="197" y="103" width="4" height="1" fill="#7a7a7a"/><rect x="197" y="105" width="3" height="1" fill="#7a7a7a"/><rect x="197" y="107" width="4" height="1" fill="#7a7a7a"/><path d="M202 100.3 h5 v-1.4 l3.3 2.6 l-3.3 2.6 v-1.4 h-5 Z" fill="#cc9a06"/><path d="M199.2 114.6 L203.34 110.59" stroke="#cc9a06" stroke-width="2.1"/><circle cx="205.5" cy="108.5" r="3" fill="#fff" stroke="#2c5f9e" stroke-width="1"/><rect x="197" y="121" width="4" height="1" fill="#7a7a7a"/><rect x="197" y="123" width="3" height="1" fill="#7a7a7a"/><rect x="197" y="125" width="4" height="1" fill="#7a7a7a"/><rect x="197" y="127" width="3" height="1" fill="#7a7a7a"/><rect x="197" y="129" width="4" height="1" fill="#7a7a7a"/><path d="M210.3 122.3 h-5 v-1.4 l-3.3 2.6 l3.3 2.6 v-1.4 h5 Z" fill="#cc9a06"/><path d="M199.2 136.6 L203.34 132.59" stroke="#cc9a06" stroke-width="2.1"/><circle cx="205.5" cy="130.5" r="3" fill="#fff" stroke="#2c5f9e" stroke-width="1"/><rect x="197.6" y="144" width="1.8" height="1.8" fill="#2c5f9e"/><rect x="197.6" y="146.8" width="1.8" height="4.4" fill="#2c5f9e"/><path d="M198.7 159 L202.86 154.90" stroke="#cc9a06" stroke-width="2.1"/><circle cx="205" cy="152.8" r="3" fill="#fff" stroke="#2c5f9e" stroke-width="1"/><rect x="197" y="183" width="1" height="5" fill="#6e6e6e"/><rect x="209" y="175" width="1" height="13" fill="#6e6e6e"/><rect x="198" y="175.5" width="11" height="12.5" fill="#fbfbfb"/><path d="M203 177.5 h5 M204 179.5 h4 M203 181.5 h5 M202 183.5 h2 M205.5 183.5 h2.5 M203 185.5 h5" stroke="#c6c6c6"/><rect x="199" y="185" width="3" height="2" fill="#2c5f9e"/><path d="M198.2 172.7 h2.8 v5.6 h2.3 l-3.7 4.7 l-3.7 -4.7 h2.3 Z" fill="#cc9a06"/><g transform="translate(0,-1)"><rect x="197" y="195" width="1" height="5" fill="#6e6e6e"/><rect x="209" y="195" width="1" height="13" fill="#6e6e6e"/><rect x="198" y="195" width="11" height="12.5" fill="#fbfbfb"/><path d="M203 196.5 h5 M202 198.5 h2 M205.5 198.5 h2.5 M203 200.5 h5 M204 202.5 h4 M203 204.5 h5 M203 206.5 h5" stroke="#c6c6c6"/><rect x="199" y="196" width="3" height="2" fill="#2c5f9e"/><path d="M198.2 210.3 h2.8 v-5.6 h2.3 l-3.7 -4.7 l-3.7 4.7 h2.3 Z" fill="#cc9a06"/></g><rect x="198" y="217" width="1" height="5.5" fill="#6e6e6e"/><rect x="198" y="228" width="1" height="3.5" fill="#6e6e6e"/><rect x="210" y="217" width="1" height="14.5" fill="#6e6e6e"/><rect x="199" y="217" width="11" height="14.5" fill="#fbfbfb"/><path d="M200 218.5 h2.5 M204.5 218.5 h4.5 M203 220.5 h2 M206 220.5 h3 M204.5 222.5 h1.5 M207 222.5 h2 M204 226.5 h4.5 M203 228.5 h5" stroke="#c6c6c6"/><path d="M205 224.5 h4" stroke="#d0282e" stroke-width="1.2"/><path d="M195.2 223.3 h4.6 v-2.3 l4.4 3.5 l-4.4 3.5 v-2.3 h-4.6 Z" fill="#cc9a06"/><text x="197.8" y="256.4" text-anchor="middle" font-family="Liberation Sans,sans-serif" font-weight="bold" font-size="12" fill="#2c5f9e">{</text><text x="207.6" y="256.4" text-anchor="middle" font-family="Liberation Sans,sans-serif" font-weight="bold" font-size="12" fill="#2c5f9e">}</text><path d="M202.6 250 v5 M200.1 252.5 h5" stroke="#d0282e" stroke-width="1.2"/><path d="M195 276 h6.8 l1.2 -2 h5.0 v11 h-13 Z" fill="#cc9a06"/><path d="M203.4 275.5 h3.0" stroke="#fdf6e0" stroke-width="1"/><circle cx="206.7" cy="284.6" r="4.4" fill="#f0f0f0"/><path d="M200.3 290.2 L204.44 286.58" stroke="#cc9a06" stroke-width="2.1"/><circle cx="206.7" cy="284.6" r="3" fill="#fff" stroke="#2c5f9e" stroke-width="1"/><g fill="none" stroke-width="2.6"><path d="M207.01 301.06 A5.5 5.5 0 0 0 198.04 301.85" stroke="#db3028"/><path d="M198.04 301.85 A5.5 5.5 0 0 0 197.82 306.92" stroke="#fbbc05"/><path d="M197.82 306.92 A5.5 5.5 0 0 0 207.31 307.75" stroke="#2a9a3c"/><path d="M207.31 307.75 A5.5 5.5 0 0 0 208.30 304.60" stroke="#4285f4"/></g><rect x="202.5" y="303.3" width="7.1" height="2.7" fill="#4285f4"/><path d="M196.5 327.5 h6.5 v10 h-6.5 Z M203 327.5 h7.5 v10 h-7.5 Z" fill="#fbfbfb" stroke="#777" stroke-width="0.9"/><path d="M198 329.5 h3.5 M198 331.5 h3.5 M198 333.5 h3.5 M198 335.5 h3.5" stroke="#bcbcbc"/><path d="M204.5 330 v1 M204.5 332.5 v1 M204.5 335 v1" stroke="#bcbcbc"/><path d="M206 327 h3 v13 l-1.5 -1.3 l-1.5 1.3 Z" fill="#cc2229"/></svg>
<div class="a" style="left:1029px;top:0;width:79px;height:20px;background:linear-gradient(#757575 0,#5a5a5a 2px,#383838 5px,#171717 6.5px,#171717 100%)"></div>
<div class="a" style="left:1033px;top:0;width:9px;height:17px;background:radial-gradient(circle at 1.3px 1.8px,#000 0.7px,rgba(80,80,80,0.6) 1.1px,transparent 1.3px) 0 1px/3px 4px"></div>
<svg style="left:1047px;top:0" width="20" height="16" viewBox="0 0 20 16"><path d="M3 5.3 Q4.5 2.2 7.5 2 Q10.5 2.2 12 -0.5" fill="none" stroke="#aaa" stroke-width="0.7"/><rect x="2" y="6.2" width="13.5" height="7" rx="1" fill="#5a5a5a" stroke="#d2d2d2" stroke-width="1.1"/><path d="M4 8.5 L6 8.5 M7.2 8.5 L8.4 8.5 M9.4 8.5 L10.6 8.5 M11.6 8.5 L13.6 8.5 M4 10.7 L5 10.7 M6.2 10.7 L12 10.7 M13 10.7 L13.8 10.7" stroke="#f4f4f4" stroke-width="1.1"/></svg>
<div class="a" style="left:1071px;top:0;width:14.4px;height:14.4px;border-radius:8px;background:radial-gradient(circle at 45% 35%,#2a3af0,#0a12c0 55%,#050a80 100%);border:1px solid #b8b8a8"></div>
<div class="t" style="left:1074.7px;top:-1px;color:#fff;font-weight:bold;font-size:12px">?</div>
<div class="a" style="left:1097px;top:2px;width:5px;height:2px;background:#fff"></div>
<svg style="left:1096px;top:10px" width="7" height="5" viewBox="0 0 7 5"><path d="M0.5 1 L6.5 1 L3.5 4.5 Z" fill="#fff"/></svg>
<div class="a" style="left:1753px;top:10px;width:31px;height:17px;border:1px solid #5b6f8b;border-radius:3px;background:linear-gradient(#c5d6ea 0,#bccee5 48%,#a3b9d5 50%,#b2c7df 100%);box-shadow:inset 0 0 0 1px rgba(255,255,255,0.45)"></div>
<div class="a" style="left:1786px;top:10px;width:31px;height:17px;border:1px solid #5b6f8b;border-radius:3px;background:linear-gradient(#c5d6ea 0,#bccee5 48%,#a3b9d5 50%,#b2c7df 100%);box-shadow:inset 0 0 0 1px rgba(255,255,255,0.45)"></div>
<div class="a" style="left:1819px;top:10px;width:31px;height:17px;border:1px solid #4a1418;border-radius:3px;background:linear-gradient(#eaa99b 0,#dd8a78 48%,#c4442a 50%,#cc6248 85%,#d87c62 100%);box-shadow:inset 0 0 0 1px rgba(255,255,255,0.4)"></div>
<div class="a" style="left:1763px;top:18px;width:11px;height:5px;background:#f4f4f4;border:1px solid #54586a;border-radius:1.5px"></div>
<div class="a" style="left:1796px;top:14px;width:11px;height:9px;background:#f6f6f6;border:1px solid #54586a;border-radius:1.5px"></div><div class="a" style="left:1799px;top:17px;width:5px;height:3px;background:#a9bdd8;border:1px solid #54586a"></div>
<svg style="left:1828px;top:13px" width="14" height="11" viewBox="0 0 14 11"><path d="M2.3 2 L10.7 8.6 M10.7 2 L2.3 8.6" stroke="#47393c" stroke-width="4.4"/><path d="M3 2.55 L10 8.05 M10 2.55 L3 8.05" stroke="#fafafa" stroke-width="2.5"/></svg>
<div class="a" style="left:1795px;top:31px;width:18px;height:18px;border:1px solid #93a2b9;background:linear-gradient(#e6f0fa,#dbe8f6 50%,#d6e4f4 50%,#e2edf9);box-shadow:inset 0 0 0 1px rgba(255,255,255,0.6)"></div>
<div class="a" style="left:1814px;top:31px;width:18px;height:18px;border:1px solid #93a2b9;background:linear-gradient(#e6f0fa,#dbe8f6 50%,#d6e4f4 50%,#e2edf9);box-shadow:inset 0 0 0 1px rgba(255,255,255,0.6)"></div>
<div class="a" style="left:1833px;top:31px;width:18px;height:18px;border:1px solid #93a2b9;background:linear-gradient(#e6f0fa,#dbe8f6 50%,#d6e4f4 50%,#e2edf9);box-shadow:inset 0 0 0 1px rgba(255,255,255,0.6)"></div>
<div class="a" style="left:1800px;top:42px;width:6px;height:2px;background:#66768a"></div>
<svg style="left:1818px;top:35px" width="10" height="10" viewBox="0 0 10 10"><path d="M3.6 3.3 L3.6 1.6 L8.4 1.6 L8.4 5.6 L6.6 5.6" fill="none" stroke="#66768a" stroke-width="1.2"/><rect x="1.1" y="4.1" width="5" height="4.3" fill="none" stroke="#66768a" stroke-width="1.2"/><path d="M1.1 4.6 h5" stroke="#66768a" stroke-width="1.2"/></svg>
<svg style="left:1838px;top:36px" width="9" height="9" viewBox="0 0 9 9"><path d="M1.2 1.2 L7.6 7.6 M7.6 1.2 L1.2 7.6" stroke="#66768a" stroke-width="1.7"/></svg>
<div class="a" style="left:1656px;top:0;width:104px;height:21px;border:1px solid #2a7fc8;border-top:none;border-radius:0 0 4px 4px;background:linear-gradient(#d8effc 0,#c4e6fa 50%,#b0dcf6 55%,#bce2f8 100%)"></div>
<div class="a" style="left:1657px;top:0;width:29px;height:20px;border-radius:0 0 0 3px;background:linear-gradient(#2ea0ec,#1a86dc)"></div>
<svg style="left:1661px;top:0" width="22" height="18" viewBox="0 0 22 18"><g fill="none" stroke="#fff" stroke-width="2.2"><circle cx="11" cy="4.5" r="3.4"/><circle cx="6" cy="11" r="3.4"/><circle cx="16" cy="11" r="3.4"/></g></svg>
<div class="t" style="left:1699px;top:2px;color:#56789c">拖拽上传</div>
<svg style="left:0;top:0" width="70" height="72" viewBox="0 0 70 72"><g opacity="0.72"><ellipse cx="31.5" cy="30.3" rx="27" ry="17.8" transform="rotate(-19 31.5 30.3)" fill="#1585cf"/><path d="M9 52 C 18 56, 34 56, 46 49 C 54 44, 59 40, 61 37 C 60 46, 55 54, 48 60 L 47.5 64 L 37.5 65.5 L 37.5 66.5 L 29 66 L 29 63 C 20 61, 13 57, 9 52 Z" fill="#f69a2e"/></g><g fill="#f2f7fc" opacity="0.62"><path d="M15.5 39.5 L28.5 28.5 L29.5 29 L29.5 46.5 L18 46.5 L18 39.5 Z"/><path d="M36 29.5 L48 23 L59.5 29 L57 30 L48 25.5 L48 41 L37.5 44.5 L37.5 30.5 Z"/><path d="M5.5 44 Q 8 31 22 26.5 Q 10 33 7.5 45 Z"/><path d="M23.3 20.8 L24.2 22.8 L26.3 23.5 L24.2 24.3 L23.3 26.3 L22.4 24.3 L20.3 23.5 L22.4 22.8 Z"/></g><path d="M48 26 Q 55 30 54 38 Q 52 42 48 41 Z" fill="#1585cf" opacity="0.72"/></svg>
<div class="t" style="left:64px;top:8px;height:40px;line-height:40px;font-family:'Noto Serif CJK SC','Liberation Serif',serif;font-weight:900;font-size:27px;color:#2b90e2;-webkit-text-stroke:0.5px #2b90e2;opacity:0.72;letter-spacing:0px">河东软件园</div>
<div class="t" style="left:66px;top:44.3px;height:26px;line-height:26px;font-family:'Liberation Serif',serif;font-weight:bold;font-size:21px;color:#48aa48;opacity:0.82;letter-spacing:-0.45px">www.pc0359.cn</div>
</body></html>
